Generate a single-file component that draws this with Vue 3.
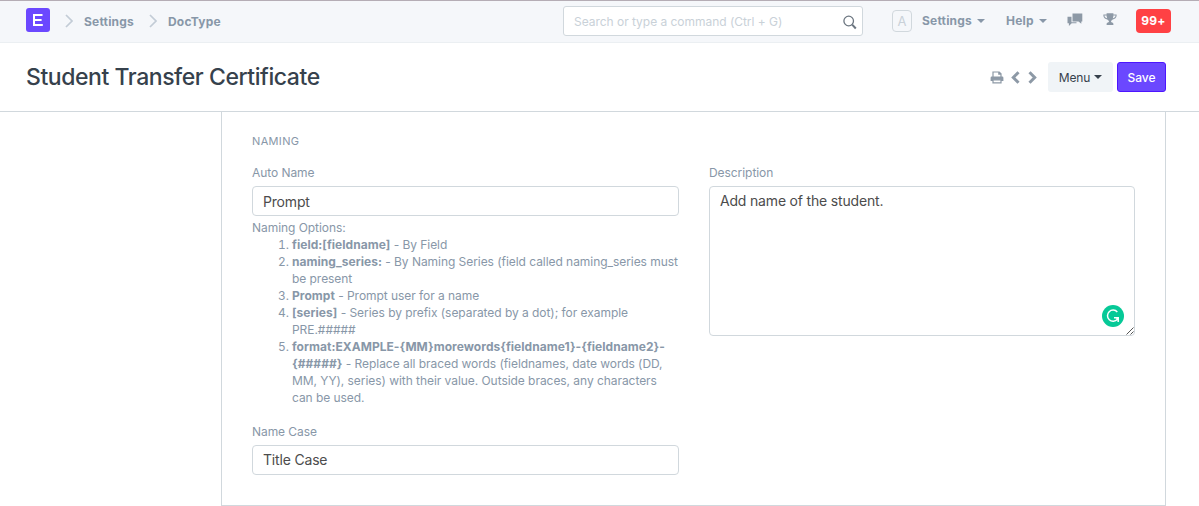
<script setup>
import { ref } from 'vue'

const crumbs = ['Settings', 'DocType']
const autoName = ref('Prompt')
const nameCase = ref('Title Case')
const description = ref('Add name of the student.')
const options = [
  { term: 'field:[fieldname]', text: ' - By Field' },
  { term: 'naming_series:', text: ' - By Naming Series (field called naming_series must be present' },
  { term: 'Prompt', text: ' - Prompt user for a name' },
  { term: '[series]', text: ' - Series by prefix (separated by a dot); for example PRE.#####' },
  {
    term: 'format:EXAMPLE-{MM}morewords{fieldname1}-{fieldname2}-{#####}',
    text: ' - Replace all braced words (fieldnames, date words (DD, MM, YY), series) with their value. Outside braces, any characters can be used.',
  },
]
</script>

<template>
  <div class="page">
    <header class="navbar">
      <div class="logo">
        <svg width="24" height="24" viewBox="0 0 24 24">
          <rect width="24" height="24" rx="3" fill="#6b48ff" />
          <path d="M16.500 7H8v10h8.800M8 12h7.600" fill="none" stroke="#fff" stroke-width="2" />
        </svg>
      </div>
      <nav class="crumbs">
        <template v-for="c in crumbs" :key="c">
          <svg class="chev" width="8" height="14" viewBox="0 0 8 14">
            <path d="M1 1l6 6-6 6" fill="none" stroke="#c3ccd6" stroke-width="1.700" />
          </svg>
          <a>{{ c }}</a>
        </template>
      </nav>
      <div class="search">
        <input placeholder="Search or type a command (Ctrl + G)" />
        <svg width="14" height="15" viewBox="0 0 14 15">
          <circle cx="5.700" cy="6" r="4.800" fill="none" stroke="#6c7680" stroke-width="1.300" />
          <path d="M9.200 9.600l3.600 3.900" stroke="#6c7680" stroke-width="2" />
        </svg>
      </div>
      <div class="avatar">A</div>
      <a class="drop settings">Settings<i class="caret"></i></a>
      <a class="drop help">Help<i class="caret"></i></a>
      <svg class="chat" width="16" height="14" viewBox="0 0 16 14">
        <path d="M5.500 0.500h9.800v8h-1v2.200l-2.800-2.200h-6z" fill="#8d99a6" />
        <path d="M4.500 3.700H0.500v6.600h1.400V13l2.800-2.700h4.800v-1H4.500z" fill="#8d99a6" />
      </svg>
      <svg class="trophy" width="14" height="13" viewBox="0 0 14 13">
        <path d="M3.600 0.300h6.800v1.200H13.600v1.300c0 2-1.800 3.300-3.900 3.600-.6.700-1.600 1.100-1.700 1.900 0 1 .9 1.100 1.700 1.500.5.300.7.800.7 1.400v.7H3.600v-.7c0-.6.200-1.100.7-1.400.8-.4 1.700-.5 1.700-1.500-.1-.8-1.100-1.200-1.700-1.900C2.200 6.100.4 4.800.4 2.800V1.500h3.200z" fill="#8d99a6" />
        <path d="M1.400 2.500h2.200c0 1 .2 2 .6 2.800C2.700 4.900 1.400 4 1.400 2.500zM12.600 2.500h-2.200c0 1-.2 2-.6 2.800 1.500-.4 2.800-1.300 2.800-2.800z" fill="#f5f7fa" />
      </svg>
      <span class="badge">99+</span>
    </header>

    <section class="head">
      <h1>Student Transfer Certificate</h1>
      <div class="actions">
        <svg class="print" width="14" height="13" viewBox="0 0 14 13">
          <path d="M3 6V1h6.200L11 2.800V6M8.800 1v2.200h2" fill="none" stroke="#8d99a6" stroke-width="1.200" />
          <path d="M1.800 5.600h10.400a1.200 1.200 0 0 1 1.200 1.200V10H.6V6.800a1.200 1.200 0 0 1 1.200-1.200z" fill="#8d99a6" />
          <path d="M3 8.800h8v3.100H3z" fill="#fff" stroke="#8d99a6" stroke-width="1.200" />
        </svg>
        <svg class="prev" width="9" height="13" viewBox="0 0 9 13">
          <path d="M7.500 1.200L2.300 6.500l5.200 5.300" fill="none" stroke="#8d99a6" stroke-width="3" />
        </svg>
        <svg class="next" width="9" height="13" viewBox="0 0 9 13">
          <path d="M1.500 1.200l5.200 5.300-5.200 5.300" fill="none" stroke="#8d99a6" stroke-width="3" />
        </svg>
        <button class="btn menu">Menu<i class="caret"></i></button>
        <button class="btn save">Save</button>
      </div>
    </section>

    <main class="form">
      <h2>NAMING</h2>
      <div class="cols">
        <div class="col">
          <label>Auto Name</label>
          <input v-model="autoName" class="control" />
          <div class="help-box">
            Naming Options:
            <ol>
              <li v-for="o in options" :key="o.term"><b>{{ o.term }}</b>{{ o.text }}</li>
            </ol>
          </div>
          <label class="case">Name Case</label>
          <input v-model="nameCase" class="control select" />
        </div>
        <div class="col">
          <label>Description</label>
          <div class="area">
            <textarea v-model="description" class="control"></textarea>
            <svg class="assist" width="22" height="22" viewBox="0 0 22 22">
              <circle cx="11" cy="11" r="11" fill="#06c997" />
              <path d="M15.300 7A5.600 5.600 0 1 0 15.400 14.300M12 12.700H16.200V17" fill="none" stroke="#fff" stroke-width="1.500" />
              <path d="M13 12.200h3.700v3.700z" fill="#fff" />
            </svg>
            <svg class="grip" width="8" height="8" viewBox="0 0 8 8">
              <path d="M0.500 7.500l7-7M4.500 7.500l3-3" stroke="#555" stroke-width="1" />
            </svg>
          </div>
        </div>
      </div>
    </main>
  </div>
</template>

<style>
body { margin: 0; background: #fff; overflow: hidden; }
</style>

<style scoped>
* { box-sizing: border-box; }
.page {
  height: 506px;
  font-family: Inter, "Liberation Sans", sans-serif;
  font-size: 12px;
  color: #8897a8;
  overflow: hidden;
}
svg { display: block; flex: none; }
.navbar {
  height: 43px;
  padding-left: 26px;
  display: flex;
  align-items: flex-start;
  background: #f5f7fa;
  border-top: 1px solid #b5adb5;
  border-bottom: 1px solid #ebeff2;
  font-weight: 700;
}
.logo { margin-top: 7px; width: 24px; }
.crumbs { display: flex; width: 513px; letter-spacing: 0.200px; }
.crumbs a { line-height: 16px; margin-top: 13px; white-space: nowrap; }
.chev { margin: 13px 11px 0 15px; }
.search { position: relative; width: 300px; height: 30px; margin-top: 5px; }
.search input {
  width: 300px;
  height: 30px;
  padding: 1px 9px 0 10px;
  border: 1px solid #d1d8dd;
  border-radius: 3px;
  background: #fff;
  font: 12px Inter, sans-serif;
  letter-spacing: -0.030px;
  outline: none;
}
.search input::placeholder { color: #c9d1d8; opacity: 1; }
.search svg { position: absolute; left: 280px; top: 9px; }
.avatar {
  width: 20px;
  height: 22px;
  margin: 9px 0 0 29px;
  border: 1px solid #d1d8dd;
  border-radius: 4px;
  line-height: 21px;
  text-align: center;
  font-size: 13px;
  font-weight: 400;
  color: #c9d1d8;
}
.drop { display: flex; align-items: center; margin-top: 12px; line-height: 16px; white-space: nowrap; }
.settings { width: 84px; margin-left: 10px; letter-spacing: 0.200px; }
.help { width: 61px; letter-spacing: 0.200px; }
.caret {
  width: 0;
  height: 0;
  margin-left: 5px;
  border: 4px solid transparent;
  border-top-color: currentColor;
  border-bottom: 0;
}
.chat { margin-top: 12px; }
.trophy { margin: 12px 0 0 20px; }
.badge {
  width: 35px;
  height: 24px;
  margin: 8px 0 0 19px;
  border-radius: 4px;
  background: #ff4144;
  color: #fff;
  text-align: center;
  line-height: 24px;
  letter-spacing: 0.200px;
}
.head {
  height: 69px;
  padding: 0 33px 0 26px;
  display: flex;
  justify-content: space-between;
  border-bottom: 1px solid #d1d8dd;
}
h1 {
  margin: 18px 0 0;
  font-size: 23px;
  line-height: 32px;
  font-weight: 500;
  letter-spacing: -0.440px;
  color: #36414c;
  white-space: nowrap;
}
.actions { display: flex; align-items: center; height: 30px; margin-top: 19px; }
.prev { margin-left: 7px; }
.next { margin-left: 8px; }
.btn {
  height: 30px;
  padding: 0;
  border: 0;
  border-radius: 3px;
  font: 12px Inter, sans-serif;
  display: flex;
  align-items: center;
  justify-content: center;
}
.menu { width: 65px; margin: 0 4px 0 11px; background: #f0f4f7; color: #36414c; letter-spacing: -0.100px; }
.menu .caret { margin-left: 4px; }
.save { width: 49px; background: #6b48ff; border: 1px solid #4d15ff; color: #fff; font-weight: 500; }
.form {
  width: 945px;
  height: 394px;
  margin-left: 221px;
  padding: 22px 30px 0;
  border: 1px solid #d1d8dd;
  border-top: 0;
}
h2 { margin: 0; font-size: 11px; line-height: 14px; font-weight: 400; letter-spacing: 0.350px; }
.cols { display: flex; gap: 30px; margin-top: 16px; }
.col { width: 427px; }
.col + .col { width: 426px; }
label { display: block; height: 17px; margin-bottom: 5px; line-height: 17px; letter-spacing: -0.060px; }
.control {
  display: block;
  width: 100%;
  height: 30px;
  margin: 0;
  padding: 1px 10px 0;
  border: 1px solid #d1d8dd;
  border-radius: 4px;
  background: #fff;
  color: #4c4c4c;
  font: 14px/20px Inter, sans-serif;
  letter-spacing: -0.180px;
  outline: none;
}
.select { padding: 0 10px 1px; }
.help-box { margin-top: 3px; line-height: 17px; letter-spacing: -0.050px; }
ol { margin: 0; padding-left: 40px; }
b { font-weight: 700; letter-spacing: 0.040px; }
.case { margin-top: 17px; }
.area { position: relative; }
textarea.control { height: 150px; padding-top: 4px; resize: none; }
.assist { position: absolute; right: 11px; bottom: 9px; }
.grip { position: absolute; right: 1px; bottom: 1px; }
</style>
